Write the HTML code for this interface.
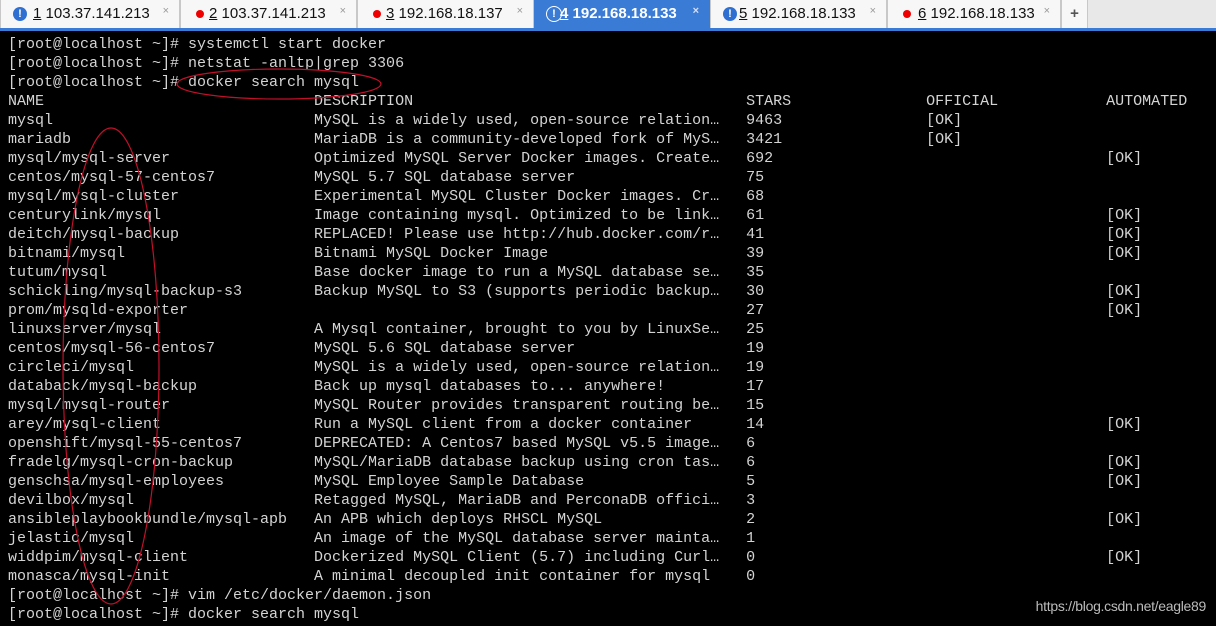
<!DOCTYPE html>
<html><head><meta charset="utf-8"><style>
body{margin:0;width:1216px;height:626px;overflow:hidden;background:#000;position:relative;font-family:"Liberation Sans",sans-serif}
#tabs{position:absolute;left:0;top:0;width:1216px;height:28px;background:#e8e8e8}
.tab{position:absolute;top:0;height:28px;background:#f7f7f7;border-right:1px solid #c8c8c8;border-left:1px solid #c8c8c8;font-size:15px;color:#111;line-height:28px;box-sizing:border-box}
.tab .t{position:absolute;left:32px;top:0}
.tab .x{position:absolute;right:10px;top:-3px;font-size:11px;color:#999}
.tab.a{background:#3a7bd5;color:#fff;font-weight:bold;border-color:#3a7bd5}
.tab.a .x{color:#dde}
.ic{position:absolute;left:12px;top:7px;width:14px;height:14px;border-radius:50%;background:#2f6fd1;color:#fff;font-size:11px;font-weight:bold;line-height:14px;text-align:center}
.a .ic{background:none;border:1.5px solid #fff;left:11px;top:6px}
.dot{position:absolute;left:15px;top:10px;width:8px;height:8px;border-radius:50%;background:#e00}
#bar{position:absolute;left:0;top:28px;width:1216px;height:3px;background:#3a7bd5}
pre{position:absolute;left:8px;top:35px;margin:0;font:15px/19px "Liberation Mono",monospace;color:#d4d4d4;letter-spacing:0}
#wm{position:absolute;right:10px;top:598px;color:#bbb;font-size:14px;letter-spacing:-0.3px}
u{text-decoration:underline}
</style></head><body>
<div id="tabs">
<div class="tab" style="left:0;width:180px"><div class="ic">!</div><span class="t"><u>1</u> 103.37.141.213</span><span class="x">×</span></div>
<div class="tab" style="left:180px;width:177px"><div class="dot"></div><span class="t" style="left:28px"><u>2</u> 103.37.141.213</span><span class="x">×</span></div>
<div class="tab" style="left:357px;width:177px"><div class="dot"></div><span class="t" style="left:28px"><u>3</u> 192.168.18.137</span><span class="x">×</span></div>
<div class="tab a" style="left:534px;width:176px"><div class="ic">!</div><span class="t" style="left:25px"><u>4</u> 192.168.18.133</span><span class="x">×</span></div>
<div class="tab" style="left:710px;width:177px"><div class="ic">!</div><span class="t" style="left:28px"><u>5</u> 192.168.18.133</span><span class="x">×</span></div>
<div class="tab" style="left:887px;width:174px"><div class="dot"></div><span class="t" style="left:30px"><u>6</u> 192.168.18.133</span><span class="x">×</span></div>
<div class="tab" style="left:1061px;width:27px;text-align:center;font-weight:bold;color:#555">+</div>
</div>
<div id="bar"></div>
<pre>[root@localhost ~]# systemctl start docker
[root@localhost ~]# netstat -anltp|grep 3306
[root@localhost ~]# docker search mysql
NAME                              DESCRIPTION                                     STARS               OFFICIAL            AUTOMATED
mysql                             MySQL is a widely used, open-source relation…   9463                [OK]
mariadb                           MariaDB is a community-developed fork of MyS…   3421                [OK]
mysql/mysql-server                Optimized MySQL Server Docker images. Create…   692                                     [OK]
centos/mysql-57-centos7           MySQL 5.7 SQL database server                   75
mysql/mysql-cluster               Experimental MySQL Cluster Docker images. Cr…   68
centurylink/mysql                 Image containing mysql. Optimized to be link…   61                                      [OK]
deitch/mysql-backup               REPLACED! Please use http://hub.docker.com/r…   41                                      [OK]
bitnami/mysql                     Bitnami MySQL Docker Image                      39                                      [OK]
tutum/mysql                       Base docker image to run a MySQL database se…   35
schickling/mysql-backup-s3        Backup MySQL to S3 (supports periodic backup…   30                                      [OK]
prom/mysqld-exporter                                                              27                                      [OK]
linuxserver/mysql                 A Mysql container, brought to you by LinuxSe…   25
centos/mysql-56-centos7           MySQL 5.6 SQL database server                   19
circleci/mysql                    MySQL is a widely used, open-source relation…   19
databack/mysql-backup             Back up mysql databases to... anywhere!         17
mysql/mysql-router                MySQL Router provides transparent routing be…   15
arey/mysql-client                 Run a MySQL client from a docker container      14                                      [OK]
openshift/mysql-55-centos7        DEPRECATED: A Centos7 based MySQL v5.5 image…   6
fradelg/mysql-cron-backup         MySQL/MariaDB database backup using cron tas…   6                                       [OK]
genschsa/mysql-employees          MySQL Employee Sample Database                  5                                       [OK]
devilbox/mysql                    Retagged MySQL, MariaDB and PerconaDB offici…   3
ansibleplaybookbundle/mysql-apb   An APB which deploys RHSCL MySQL                2                                       [OK]
jelastic/mysql                    An image of the MySQL database server mainta…   1
widdpim/mysql-client              Dockerized MySQL Client (5.7) including Curl…   0                                       [OK]
monasca/mysql-init                A minimal decoupled init container for mysql    0
[root@localhost ~]# vim /etc/docker/daemon.json
[root@localhost ~]# docker search mysql</pre>
<svg width="1216" height="626" style="position:absolute;left:0;top:0">
<ellipse cx="279" cy="84" rx="102" ry="15" fill="none" stroke="#c0102a" stroke-width="1.2"/>
<ellipse cx="111" cy="366" rx="48" ry="238" fill="none" stroke="#c0102a" stroke-width="1.2"/>
</svg>
<div id="wm">https://blog.csdn.net/eagle89</div>
</body></html>
